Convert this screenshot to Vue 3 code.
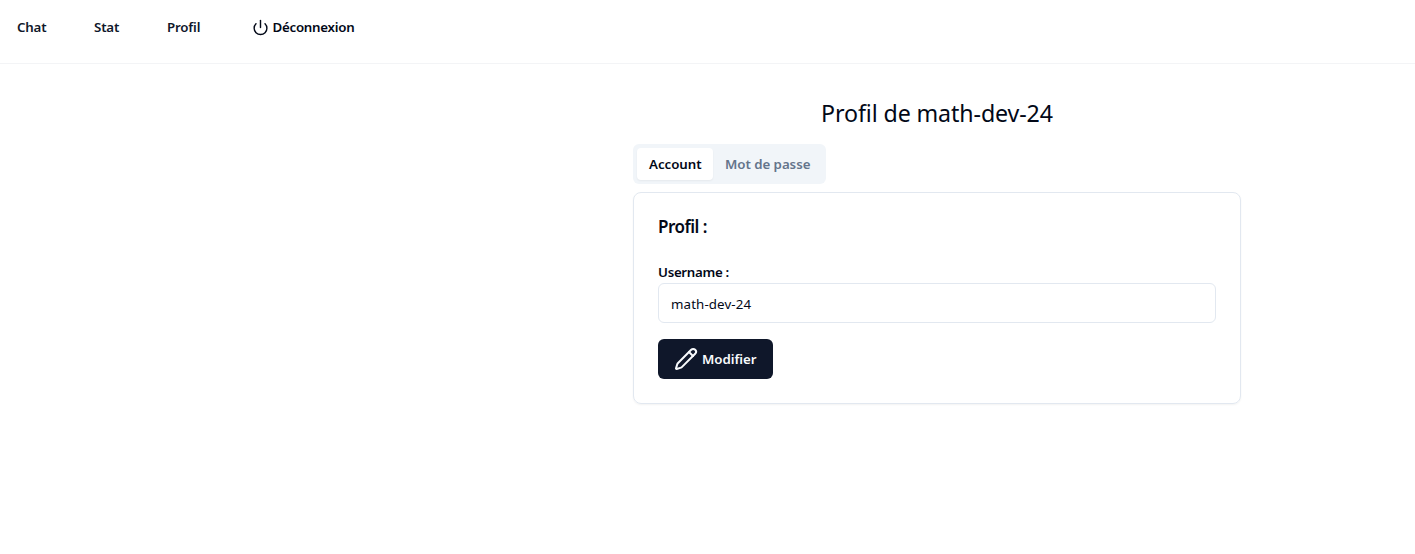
<script setup>
import { ref } from 'vue'
const username = ref('math-dev-24')
const links = [
  { label: 'Chat', cls: 'chat' },
  { label: 'Stat', cls: 'stat' },
  { label: 'Profil', cls: 'prof' },
]
</script>

<template>
  <div class="page">
    <header class="nav">
      <a v-for="l in links" :key="l.label" class="link" :class="l.cls"><span>{{ l.label }}</span></a>
      <button class="logout">
        <svg width="17" height="17" viewBox="0 0 24 24" fill="none" stroke="currentColor" stroke-width="2" stroke-linecap="round" stroke-linejoin="round">
          <path d="M12 2v10" />
          <path d="M18.4 6.6a9 9 0 1 1-12.77.04" />
        </svg>
        <span>Déconnexion</span>
      </button>
    </header>
    <main class="content">
      <h1><span>Profil de {{ username }}</span></h1>
      <div class="tabs">
        <button class="tab active"><span>Account</span></button>
        <button class="tab second"><span>Mot de passe</span></button>
      </div>
      <section class="card">
        <h2><span>Profil :</span></h2>
        <label><span>Username :</span></label>
        <div class="field"><span>{{ username }}</span></div>
        <button class="edit">
          <svg width="24" height="24" viewBox="0 0 24 24" fill="none" stroke="currentColor" stroke-width="2" stroke-linecap="round" stroke-linejoin="round">
            <path d="M21.174 6.812a1 1 0 0 0-3.986-3.987L3.842 16.174a2 2 0 0 0-.5.83l-1.321 4.352a.5.5 0 0 0 .623.622l4.353-1.32a2 2 0 0 0 .83-.497z" />
            <path d="m15 5 4 4" />
          </svg>
          <span>Modifier</span>
        </button>
      </section>
    </main>
  </div>
</template>

<style>
body { margin: 0; background: #fff; }
</style>

<style scoped>
* { box-sizing: border-box; }
.page {
  height: 554px;
  overflow: hidden;
  color: #020817;
  font: 600 13.3px/20px "Segoe UI", "Noto Sans", sans-serif;
  letter-spacing: -0.18px;
  white-space: nowrap;
}
button { font: inherit; letter-spacing: inherit; border: 0; margin: 0; padding: 0; background: none; color: inherit; text-align: left; }
.nav {
  display: flex;
  height: 64px;
  padding: 17px 0 0 17px;
  border-bottom: 1px solid #f3f4f6;
  color: #0f172a;
}
.link { height: 20px; }
.chat { width: 77px; }
.stat { width: 73px; }
.prof { width: 84.5px; }
.logout { display: flex; align-items: center; height: 20px; gap: 4px; color: #020817; }
.logout span { letter-spacing: -0.26px; }
.content { width: 608px; margin: 32px 0 0 633px; }
h1 {
  margin: 0;
  height: 36px;
  font-size: 23.2px;
  font-weight: 400;
  line-height: 34px;
  letter-spacing: -0.1px;
  text-align: center;
}
.tabs {
  display: flex;
  width: 193px;
  height: 40px;
  margin-top: 12px;
  padding: 4px;
  border-radius: 6px;
  background: #f1f5f9;
  color: #64748b;
}
.tab { height: 32px; padding: 0 12px; border-radius: 4px; letter-spacing: -0.05px; }
.active { width: 76px; background: #fff; color: #020817; box-shadow: 0 1px 2px rgba(0, 0, 0, .05); }
.card {
  height: 212px;
  margin-top: 8px;
  padding: 24px;
  border: 1px solid #e2e8f0;
  border-radius: 8px;
  box-shadow: 0 1px 2px rgba(0, 0, 0, .05);
}
h2 { margin: -3px 0 0; height: 26px; font-size: 17px; font-weight: 600; line-height: 26px; letter-spacing: -0.5px; }
label { display: block; height: 20px; margin-top: 23px; line-height: 18px; letter-spacing: -0.3px; }
.field {
  height: 40px;
  padding: 0 12px;
  border: 1px solid #e2e8f0;
  border-radius: 6px;
  line-height: 40px;
  font-weight: 400;
  letter-spacing: 0.12px;
}
.edit {
  display: flex;
  align-items: center;
  gap: 4px;
  width: 115px;
  height: 40px;
  margin-top: 16px;
  padding: 0 16px;
  border-radius: 6px;
  background: #0f172a;
  color: #f8fafc;
  letter-spacing: -0.05px;
}
</style>
